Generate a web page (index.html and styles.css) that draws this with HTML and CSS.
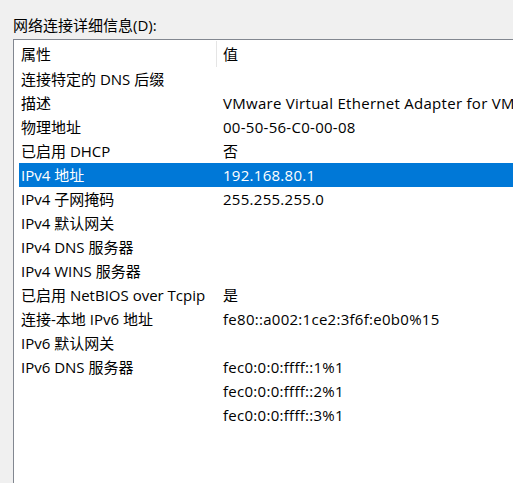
FILE: index.html
```html
<!DOCTYPE html>
<html lang="zh-CN">
<head>
<meta charset="utf-8">
<link rel="stylesheet" href="styles.css">
</head>
<body>
<div class="page">
  <div class="label">网络连接详细信息(D):</div>
  <div class="list">
    <div class="header">
      <div class="hcell hcell-prop">属性</div>
      <div class="hcell hcell-val">值</div>
    </div>
    <div class="rows">
      <div class="row"><div class="prop">连接特定的 DNS 后缀</div><div class="val"></div></div>
      <div class="row"><div class="prop">描述</div><div class="val">VMware Virtual Ethernet Adapter for VMnet8</div></div>
      <div class="row"><div class="prop">物理地址</div><div class="val">00-50-56-C0-00-08</div></div>
      <div class="row"><div class="prop">已启用 DHCP</div><div class="val">否</div></div>
      <div class="row selected"><div class="prop">IPv4 地址</div><div class="val">192.168.80.1</div></div>
      <div class="row"><div class="prop">IPv4 子网掩码</div><div class="val">255.255.255.0</div></div>
      <div class="row"><div class="prop">IPv4 默认网关</div><div class="val"></div></div>
      <div class="row"><div class="prop">IPv4 DNS 服务器</div><div class="val"></div></div>
      <div class="row"><div class="prop">IPv4 WINS 服务器</div><div class="val"></div></div>
      <div class="row"><div class="prop">已启用 NetBIOS over Tcpip</div><div class="val">是</div></div>
      <div class="row"><div class="prop">连接-本地 IPv6 地址</div><div class="val">fe80::a002:1ce2:3f6f:e0b0%15</div></div>
      <div class="row"><div class="prop">IPv6 默认网关</div><div class="val"></div></div>
      <div class="row"><div class="prop">IPv6 DNS 服务器</div><div class="val">fec0:0:0:ffff::1%1</div></div>
      <div class="row"><div class="prop"></div><div class="val">fec0:0:0:ffff::2%1</div></div>
      <div class="row"><div class="prop"></div><div class="val">fec0:0:0:ffff::3%1</div></div>
    </div>
  </div>
</div>
</body>
</html>
```
FILE: styles.css
```css
html, body {
  margin: 0;
  padding: 0;
  background: #f0f0f0;
  overflow: hidden;
  width: 513px;
  height: 483px;
}
body {
  font-family: "Open Sans", "Noto Sans CJK SC", sans-serif;
  font-size: 15px;
  color: #000;
}
.page {
  padding: 15px 0 0 13px;
}
.label {
  height: 24px;
  line-height: 20px;
  white-space: nowrap;
}
.list {
  width: 500px;
  height: 444px;
  background: #fff;
  border: 1px solid #828790;
  border-right: none;
  border-bottom: none;
  box-sizing: border-box;
  overflow: hidden;
}
.header {
  display: flex;
  height: 26px;
  margin-top: 1px;
}
.hcell {
  line-height: 26px;
  white-space: nowrap;
}
.hcell-prop {
  width: 195px;
  padding-left: 7px;
  border-right: 1px solid #e5e5e5;
  flex: none;
}
.hcell-val {
  padding-left: 6px;
}
.rows {
  padding-left: 5px;
}
.row {
  display: flex;
  height: 24px;
  line-height: 24px;
  white-space: nowrap;
}
.prop {
  width: 202px;
  padding-left: 2px;
  flex: none;
}
.val {
  flex: none;
  letter-spacing: 0.28px;
}
.selected {
  background: #0078d7;
  color: #fff;
}
```
